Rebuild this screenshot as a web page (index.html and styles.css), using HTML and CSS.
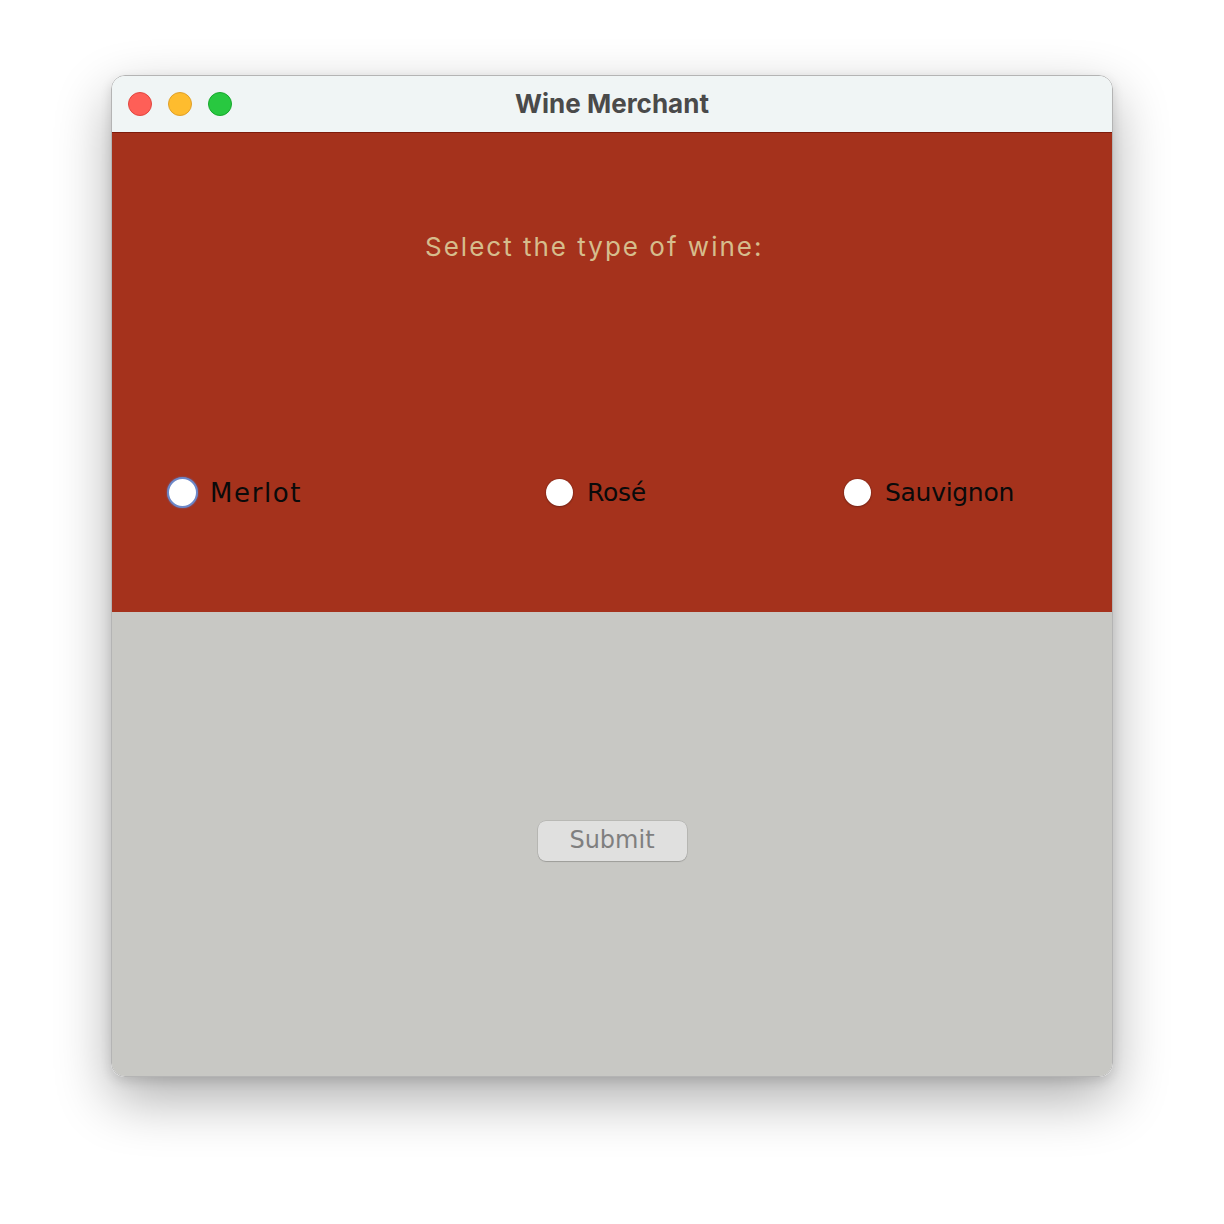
FILE: index.html
```html
<!DOCTYPE html>
<html>
<head>
<meta charset="utf-8">
<title>Wine Merchant</title>
<link rel="stylesheet" href="styles.css">
</head>
<body>
<div class="window">
  <div class="titlebar">
    <div class="lights">
      <span class="light red"></span>
      <span class="light yellow"></span>
      <span class="light green"></span>
    </div>
    <div class="title">Wine Merchant</div>
  </div>
  <div class="top">
    <div class="prompt">Select the type of wine:</div>
    <div class="options">
      <label class="option"><span class="radio focused"></span><span class="opt-text merlot">Merlot</span></label>
      <label class="option"><span class="radio"></span><span class="opt-text">Rosé</span></label>
      <label class="option"><span class="radio"></span><span class="opt-text">Sauvignon</span></label>
    </div>
  </div>
  <div class="bottom">
    <div class="submit">Submit</div>
  </div>
</div>
</body>
</html>
```
FILE: styles.css
```css
html, body {
  margin: 0;
  padding: 0;
  background: #ffffff;
}
body {
  padding: 75px 0 0 111px;
  min-height: 1224px;
  box-sizing: border-box;
}
.window {
  box-sizing: border-box;
  width: 1002px;
  height: 1002px;
  border: 1px solid #b4b4b4;
  border-radius: 14px;
  overflow: hidden;
  display: flex;
  flex-direction: column;
  box-shadow: 0 22px 55px rgba(0,0,0,0.32), 0 4px 12px rgba(0,0,0,0.12);
}
.titlebar {
  height: 56px;
  flex: none;
  background: #f0f5f5;
  border-bottom: 1px solid #7e1c0c;
  position: relative;
  display: flex;
  align-items: center;
  justify-content: center;
}
.lights {
  position: absolute;
  left: 16px;
  top: 16px;
  display: flex;
  gap: 16px;
}
.light {
  width: 24px;
  height: 24px;
  border-radius: 50%;
  box-sizing: border-box;
}
.red { background: #fe5f57; border: 1px solid #e2463f; }
.yellow { background: #febc2e; border: 1px solid #e0a029; }
.green { background: #28c840; border: 1px solid #17a82c; }
.title {
  font-family: "Inter", "Liberation Sans", sans-serif;
  font-weight: 700;
  font-size: 26px;
  color: #4a4a4a;
  margin-top: -2px;
}
.top {
  height: 479px;
  flex: none;
  background: #a5321c;
  display: flex;
  flex-direction: column;
}
.prompt {
  font-family: "Inter", "Roboto", sans-serif;
  font-size: 26px;
  letter-spacing: 2px;
  color: #d6bd8c;
  margin: 99px 0 0 313px;
  line-height: 30px;
}
.options {
  display: grid;
  grid-template-columns: 377px 298px auto;
  padding-left: 57px;
  margin-top: 215px;
}
.option {
  display: flex;
  align-items: center;
  gap: 14px;
}
.radio {
  width: 27px;
  height: 27px;
  border-radius: 50%;
  background: #ffffff;
  box-sizing: border-box;
  box-shadow: 0 0 0 1px rgba(120,40,30,0.35), 0 1px 2px rgba(0,0,0,0.25);
}
.radio.focused {
  width: 31px;
  height: 31px;
  margin-left: -2px;
  margin-right: -2px;
  border: 2px solid #6d88c8;
  box-shadow: 0 0 2px rgba(90,120,200,0.8);
}
.opt-text {
  font-family: "DejaVu Sans", sans-serif;
  font-size: 25px;
  color: #0a0a0a;
  letter-spacing: -0.3px;
}
.opt-text.merlot {
  letter-spacing: 1.6px;
  font-size: 26px;
}
.bottom {
  flex: 1;
  background: #c8c8c4;
  display: flex;
  align-items: center;
  justify-content: center;
  padding-bottom: 6px;
}
.submit {
  box-sizing: border-box;
  width: 149px;
  height: 40px;
  border-radius: 8px;
  background: #e0e0df;
  box-shadow: 0 0 0 0.5px rgba(0,0,0,0.15), 0 1px 1px rgba(0,0,0,0.15);
  font-family: "DejaVu Sans", sans-serif;
  font-size: 24px;
  color: #7f7f7f;
  display: flex;
  align-items: center;
  justify-content: center;
  padding-bottom: 2px;
}
```
